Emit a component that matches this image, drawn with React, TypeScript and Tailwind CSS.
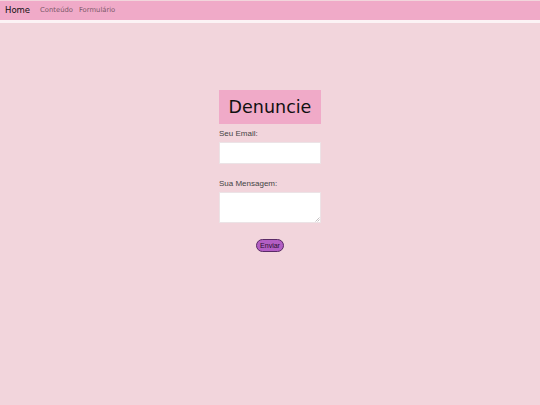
export default function App() {
  return (
    <div className="min-h-[405px] bg-[#f2d5dc] font-['DejaVu_Sans',sans-serif]">
      <div className="h-[1px] bg-[#f2d5dc]" />
      <nav className="flex h-[19px] items-center bg-[#f0aac8] px-[5px]">
        <a className="mr-[10px] text-[8.5px] text-[#111]">Home</a>
        <a className="mr-[6px] text-[6.8px] text-[#7c5868]">Conteúdo</a>
        <a className="text-[6.8px] text-[#7c5868]">Formulário</a>
      </nav>
      <div className="h-[3px] bg-[#fcf3f5]" />
      <main className="flex flex-col items-center pt-[67px]">
        <form className="flex w-[102px] flex-col">
          <h1 className="flex h-[34px] items-center justify-center bg-[#f0aac8] text-[17.5px] text-[#111]">
            Denuncie
          </h1>
          <label className="mt-[4px] font-['Liberation_Sans',sans-serif] text-[8px] text-[#444]">
            Seu Email:
          </label>
          <input className="mt-[2px] h-[22px] border border-[#ece3e6] bg-white" />
          <label className="mt-[14px] font-['Liberation_Sans',sans-serif] text-[8px] text-[#444]">
            Sua Mensagem:
          </label>
          <div className="relative mt-[2px] flex">
            <textarea className="h-[31px] w-full resize-none border border-[#ece3e6] bg-white" />
            <svg className="absolute bottom-[1px] right-[1px]" width="5" height="5" viewBox="0 0 5 5">
              <path d="M0.5 4.5 L4.5 0.5 M2.5 4.5 L4.5 2.5" stroke="#b8b0b3" strokeWidth="0.8" />
            </svg>
          </div>
          <div className="mt-[16px] flex justify-center">
            <button className="h-[13px] w-[28px] rounded-full border border-[#5a2a66] bg-[#b35ec4] font-['Liberation_Sans',sans-serif] text-[7px] leading-none text-[#2a0f30]">
              Enviar
            </button>
          </div>
        </form>
      </main>
    </div>
  );
}
